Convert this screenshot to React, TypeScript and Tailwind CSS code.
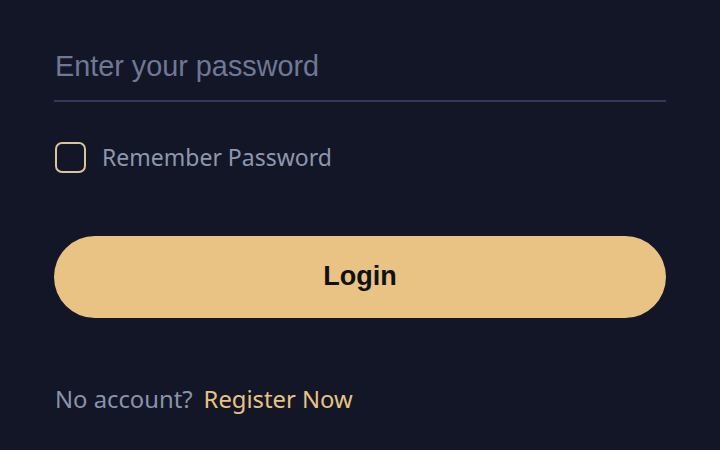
import { useState } from "react";

export default function App() {
  const [remember, setRemember] = useState(false);

  return (
    <div className="min-h-screen w-full bg-[#121627] px-[54px] pt-[48px]" style={{ fontFamily: '"Liberation Sans", Arial, sans-serif' }}>
      {/* Password field */}
      <div className="border-b-2 border-[#34385a] pb-[16px]">
        <input
          type="password"
          placeholder="Enter your password"
          className="w-full bg-transparent pl-px text-[28.8px] leading-[36px] text-[#c9cfdc] outline-none placeholder:text-[#6f7894]"
        />
      </div>

      {/* Remember */}
      <label className="mt-[38px] flex cursor-pointer items-center gap-[16px] pl-px">
        <span
          onClick={() => setRemember(!remember)}
          className="h-[31px] w-[31px] rounded-[7px] border-2 border-[#dcc49a]"
        />
        <span className="text-[23px] text-[#8e97ae]" style={{ fontFamily: '"Noto Sans", sans-serif' }}>
          Remember Password
        </span>
      </label>

      {/* Login button */}
      <button className="mt-[61px] flex h-[82px] w-full items-center justify-center rounded-full bg-[#e8c383] text-[27px] font-bold text-[#111111]">
        Login
      </button>

      {/* Register */}
      <div className="mt-[64px] flex items-center gap-[11px] pl-px text-[23.8px]" style={{ fontFamily: '"Noto Sans", sans-serif' }}>
        <span className="text-[#8a93aa]">No account?</span>
        <a className="text-[#e8c383]">Register Now</a>
      </div>
    </div>
  );
}
